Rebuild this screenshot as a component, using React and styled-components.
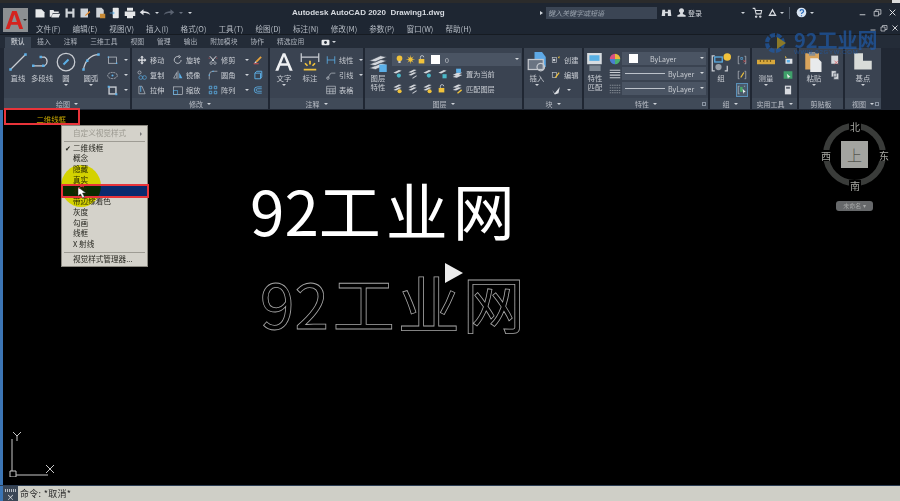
import React from 'react'
import styled, { createGlobalStyle } from 'styled-components'

const Global = createGlobalStyle`
  html, body { margin: 0; padding: 0; background: #000; }
  body { font-family: "Noto Sans CJK SC", "Liberation Sans", sans-serif; }
`

const Page = styled.div`
  width: 900px;
  height: 501px;
  display: flex;
  flex-direction: column;
  position: relative;
  overflow: hidden;
  background: #000;
  filter: blur(0.4px);
`
const TopStrip = styled.div`
  height: 3px;
  display: flex;
  justify-content: flex-end;
  background: #2b2b2b;
`
const CornerPatch = styled.div`
  width: 8px;
  height: 3px;
  background: #dcdcdc;
`
const Header = styled.div`
  height: 31px;
  display: flex;
  padding-left: 3px;
  background: #1e2632;
`
const AppButton = styled.div`
  width: 25px;
  height: 24px;
  margin-top: 5px;
  background: #8c8f92;
  color: #d5231f;
  font: bold 26px/24px "Liberation Sans", sans-serif;
  padding-left: 2px;
  box-sizing: border-box;
  flex: none;
  position: relative;
  &::after {
    content: '';
    position: absolute;
    right: 1px;
    bottom: 9px;
    border: 2px solid transparent;
    border-top-color: #222;
  }
`
const HeaderBody = styled.div`
  flex: 1;
  display: flex;
  flex-direction: column;
`
const TitleRow = styled.div`
  height: 19px;
  display: flex;
  align-items: center;
`
const QuickBar = styled.div`
  width: 264px;
  padding-left: 6px;
  display: flex;
  align-items: center;
  gap: 3px;
  flex: none;
  box-sizing: border-box;
`
const TitleText = styled.div`
  width: 246px;
  flex: none;
  font: bold 8px "Liberation Sans", sans-serif;
  color: #d6dae0;
  white-space: pre;
`
const SearchArrow = styled.span`
  width: 0;
  height: 0;
  flex: none;
  margin: 0 3px 0 2px;
  border: 2.5px solid transparent;
  border-left: 3px solid #cfd4da;
  border-right-width: 0;
`
const SearchBox = styled.div`
  width: 111px;
  height: 12px;
  flex: none;
  background: #3b4554;
  color: #9aa3ae;
  font-size: 7px;
  font-style: italic;
  line-height: 12px;
  padding-left: 2px;
  box-sizing: border-box;
`
const TitleTools = styled.div`
  display: flex;
  align-items: center;
  margin-left: 4px;
  color: #d6dae0;
  font-size: 7px;
  white-space: nowrap;
`
const Space = styled.span`
  width: ${p => p.$w}px;
  flex: none;
`
const Sep = styled.span`
  width: 1px;
  height: 12px;
  background: #4b5563;
  margin: 0 6px 0 5px;
`
const Caret = styled.span`
  display: inline-block;
  width: 0;
  height: 0;
  border: ${p => p.$s || 2}px solid transparent;
  border-top-color: ${p => p.$c || '#cfd4da'};
  border-bottom-width: 0;
  margin: ${p => p.$m || '0 1px'};
  flex: none;
`
const MenuRow = styled.div`
  height: 12px;
  display: flex;
  align-items: center;
  justify-content: space-between;
  padding-left: 8px;
`
const MenuItems = styled.div`
  display: flex;
  gap: 12px;
  font-size: 7.6px;
  color: #b6bcc4;
`
const WinButtons = styled.div`
  display: flex;
  align-items: center;
  gap: 3px;
  padding-right: 1px;
`
const TabRow = styled.div`
  height: 13px;
  display: flex;
  align-items: flex-end;
  padding-left: 5px;
  background: #242c38;
  border-top: 1px solid #161b22;
`
const Tab = styled.div`
  padding: 0 ${p => (p.$active ? '6px' : '6.5px')};
  height: 11px;
  line-height: 9px;
  font-size: 6.8px;
  color: ${p => (p.$active ? '#e3e6ea' : '#aeb4bd')};
  background: ${p => (p.$active ? '#3a4452' : 'transparent')};
`
const VideoTab = styled.div`
  height: 11px;
  display: flex;
  align-items: flex-start;
  gap: 2px;
  margin-left: 10px;
  padding-top: 1px;
  box-sizing: border-box;
`
const Ribbon = styled.div`
  height: 62px;
  display: flex;
  gap: 2px;
  padding: 0 0 1px 4px;
  box-sizing: border-box;
  background: #202733;
`
const Panel = styled.div`
  width: ${p => p.$w}px;
  flex: none;
  display: flex;
  flex-direction: column;
  background: #3a4351;
`
const PanelBody = styled.div`
  height: 50px;
  display: flex;
  padding: 4px 2px 0;
  box-sizing: border-box;
`
const PanelFoot = styled.div`
  flex: 1;
  background: #404a58;
  color: #b9bec6;
  font-size: 7px;
  display: flex;
  align-items: center;
  justify-content: center;
  position: relative;
`
const Launcher = styled.span`
  position: absolute;
  right: 2px;
  bottom: 3px;
  width: 4px;
  height: 4px;
  border: 1px solid #8a94a2;
  box-sizing: border-box;
`
const BigTool = styled.div`
  width: ${p => p.$w || 24}px;
  flex: none;
  display: flex;
  flex-direction: column;
  align-items: center;
  color: #c8ccd2;
  font-size: 7.4px;
  line-height: 9px;
  text-align: center;
`
const BigIcon = styled.div`
  height: 20px;
  display: flex;
  align-items: center;
  justify-content: center;
  margin-bottom: 1px;
`
const Col = styled.div`
  display: flex;
  flex-direction: column;
  gap: ${p => (p.$gap !== undefined ? p.$gap : 3)}px;
  width: ${p => (p.$w ? `${p.$w}px` : 'auto')};
  flex: none;
  margin: ${p => (p.$mt !== undefined ? p.$mt : 2)}px 0 0 ${p => p.$ml || 0}px;
`
const SmallTool = styled.div`
  height: 12px;
  display: flex;
  align-items: center;
  gap: 3px;
  font-size: 7.2px;
  color: #c8ccd2;
  white-space: nowrap;
  outline: ${p => (p.$on ? '1px solid #5a90b8' : 'none')};
  background: ${p => (p.$on ? '#4a5a6c' : 'transparent')};
`
const Combo = styled.div`
  width: ${p => p.$w}px;
  height: 13px;
  background: #4a5463;
  color: #c8ccd2;
  font-size: 7px;
  display: flex;
  align-items: center;
  padding-left: 3px;
  gap: 2px;
  box-sizing: border-box;
  position: relative;
  flex: none;
  &::after {
    content: '';
    position: absolute;
    right: 2px;
    top: 5px;
    border: 2.5px solid transparent;
    border-top-color: #d5d9de;
    border-bottom-width: 0;
  }
`
const Swatch = styled.span`
  width: 9px;
  height: 9px;
  background: #fff;
  margin: ${p => p.$m || 0};
`
const LineSample = styled.span`
  width: 40px;
  height: 1px;
  background: #bcc2ca;
  margin-right: 1px;
`
const IconGrid = styled.div`
  display: grid;
  grid-template-columns: repeat(5, 15px);
  row-gap: 4px;
  margin-top: 2px;
  align-items: center;
`
const LayerWrap = styled.div`
  display: flex;
  flex-direction: column;
  margin: 1px 0 0 3px;
`
const LayerRow = styled.div`
  display: flex;
  align-items: center;
  gap: 3px;
  height: 11px;
  font-size: 7.2px;
  color: #c8ccd2;
  white-space: nowrap;
`
const Canvas = styled.div`
  flex: 1;
  position: relative;
  background: #000;
  border-left: 3px solid #3c75b4;
`
const ViewLabel = styled.div`
  position: absolute;
  left: 1px;
  top: -2px;
  width: 76px;
  height: 17px;
  box-sizing: border-box;
  border: 2px solid #e8343a;
  color: #c9a800;
  font-size: 7.4px;
  line-height: 18px;
  text-align: right;
  padding-right: 12px;
`
const ContextMenu = styled.div`
  position: absolute;
  left: 58px;
  top: 15px;
  width: 87px;
  height: 142px;
  background: #d4d2ca;
  border: 1px solid #8a8880;
  box-sizing: border-box;
  padding-top: 2px;
  color: #26261f;
  font-size: 7.6px;
`
const MenuEntry = styled.div`
  height: 10.7px;
  line-height: 10.7px;
  padding-left: 11px;
  position: relative;
  white-space: nowrap;
  color: ${p => (p.$dim ? '#9a988f' : 'inherit')};
  background: ${p => (p.$hot ? '#0a2a6e' : 'transparent')};
  box-shadow: ${p => (p.$hot ? '0 1px 0 #0a2a6e, 0 -1px 0 #0a2a6e' : 'none')};
`
const MenuCheck = styled.span`
  position: absolute;
  left: 3px;
  top: 0;
  font-size: 7px;
`
const MenuArrow = styled.span`
  position: absolute;
  right: 5px;
  top: 4px;
  border: 2px solid transparent;
  border-left-color: #777;
  border-right-width: 0;
`
const MenuRule = styled.div`
  height: 1px;
  margin: 2px 2px 1px;
  background: #9e9c94;
`
const Spotlight = styled.div`
  position: absolute;
  left: 58px;
  top: 55px;
  width: 40px;
  height: 42px;
  border-radius: 50%;
  background: #ffff00;
  mix-blend-mode: multiply;
`
const RedBox = styled.div`
  position: absolute;
  left: 58px;
  top: 74px;
  width: 88px;
  height: 14px;
  box-sizing: border-box;
  border: 2px solid #e8343a;
`
const Pointer = styled.svg`
  position: absolute;
  left: 74px;
  top: 76px;
`
const BigBrand = styled.div`
  position: absolute;
  left: ${p => p.$x}px;
  top: ${p => p.$y}px;
  font-size: 62px;
  line-height: 80px;
  white-space: nowrap;
  color: ${p => (p.$outline ? 'transparent' : '#fff')};
  -webkit-text-stroke: ${p => (p.$outline ? '0.8px #a8a8a8' : '0')};
`
const BrandHan = styled.span`
  margin-left: ${p => p.$gap}px;
  letter-spacing: ${p => p.$track}px;
`
const PlayButton = styled.svg`
  position: absolute;
  left: 441px;
  top: 152px;
`
const ViewCube = styled.div`
  position: absolute;
  left: 820px;
  top: 13px;
  width: 63px;
  height: 63px;
  box-sizing: border-box;
  border: 6.5px solid #3a3c3a;
  border-radius: 50%;
  display: flex;
  align-items: center;
  justify-content: center;
`
const CubeFace = styled.div`
  width: 27px;
  height: 27px;
  background: #a3a4a0;
  color: #55564f;
  font-size: 15px;
  font-weight: 300;
  line-height: 27px;
  text-align: center;
`
const Compass = styled.span`
  position: absolute;
  left: ${p => p.$x}px;
  top: ${p => p.$y}px;
  width: 12px;
  text-align: center;
  background: #000;
  color: #a8a9a4;
  font-size: 10px;
  line-height: 11px;
`
const CubePill = styled.div`
  position: absolute;
  left: 833px;
  top: 91px;
  width: 37px;
  height: 10px;
  border-radius: 3px;
  background: #66686a;
  color: #a6a8a8;
  font-size: 6px;
  line-height: 10px;
  text-align: center;
`
const Ucs = styled.svg`
  position: absolute;
  left: 5px;
  top: 321px;
`
const CommandBar = styled.div`
  height: 15px;
  display: flex;
  align-items: stretch;
  background: #cfcfc7;
  border-top: 1px solid #2b3c52;
`
const CommandGrip = styled.div`
  width: 18px;
  flex: none;
  background: #3a4655;
  border-left: 3px solid #3c75b4;
  box-sizing: border-box;
  color: #e6e8ea;
  font-size: 8px;
  text-align: center;
  line-height: 21px;
  position: relative;
  &::before {
    content: '';
    position: absolute;
    left: 2px;
    right: 2px;
    top: 3px;
    height: 3px;
    background: repeating-linear-gradient(90deg, #b8bec6 0 1px, transparent 1px 2px);
  }
`
const CommandText = styled.div`
  padding-left: 2px;
  font-size: 9px;
  letter-spacing: 0.3px;
  line-height: 15px;
  color: #2a2a2a;
`
const Watermark = styled.div`
  position: absolute;
  left: 762px;
  top: 30px;
  display: flex;
  gap: 6px;
  color: #1f5aa8;
  opacity: 0.7;
  pointer-events: none;
`
const WatermarkName = styled.div`
  font-size: 20px;
  font-weight: 700;
  line-height: 19px;
`
const WatermarkUrl = styled.div`
  font: 6px/7px "Liberation Sans", sans-serif;
  letter-spacing: 0.75px;
  white-space: nowrap;
`

/* quick drawings for the ribbon, all on a 16 box */
const B = '#5cb0e8'
const L = '#c9cdd3'
const G = '#f0c23c'
const glyphs = {
  newDoc: <path d="M2 3h8l4 4v7H2z" fill="#e6e8ea" />,
  open: <path d="M1 13V4h5l1 2h6v2H5l-2 5zM3 14l2-5h10l-2 5z" fill="#e6e8ea" />,
  save: <path d="M2 2h12v12H2zM5 2v4h6V2zM5 9v5h6V9z" fill="#cfd3d8" fillRule="evenodd" />,
  saveAs: <g><path d="M2 2h10v12H2z" fill="#cfd3d8" /><path d="M8 11l6-6 1 2-6 5z" fill="#e58a2e" /></g>,
  cloud: <g><path d="M3 1h7l3 3v10H3z" fill="#cfd3d8" /><rect x="8" y="9" width="7" height="6" fill="#c88a35" /></g>,
  phone: <g><rect x="5" y="1" width="8" height="14" rx="1" fill="#e6e8ea" /><path d="M1 8h6M5 6l2 2-2 2" stroke={B} fill="none" /></g>,
  print: <path d="M4 1h8v4H4zM1 6h14v6h-3v3H4v-3H1z" fill="#e6e8ea" />,
  undo: <path d="M1 7l5-4v2.500c4 0 8 1 9 5-2-2-5-2.500-9-2.500V11z" fill="#e0e2e6" />,
  redo: <path d="M15 7l-5-4v2.500c-4 0-8 1-9 5 2-2 5-2.500 9-2.500V11z" fill="#5a6270" />,
  video: <g><rect x="1" y="3" width="14" height="10" rx="2" fill="#e6e8ea" /><circle cx="8" cy="8" r="2.500" fill="#242c38" /></g>,
  binoc: <path d="M2 4h4v3h4V4h4l1 9h-5V9H6v4H1z" fill="#d8dbe0" />,
  user: <path d="M8 2a3.500 3.500 0 0 1 2 6.500V10l4 2v2H2v-2l4-2V8.500A3.500 3.500 0 0 1 8 2z" fill="#d8dbe0" />,
  cart: <path d="M1 2h3l2 8h7l1-5H5M6 13a1 1 0 1 0 .1 0M12 13a1 1 0 1 0 .1 0" stroke="#d8dbe0" strokeWidth="1.500" fill="none" />,
  tri: <path d="M8 2l6 11H2zM8 6l-3 5h6z" fill="#d8dbe0" fillRule="evenodd" />,
  help: <g><circle cx="8" cy="8" r="7" fill="#d9e4f2" /><path d="M6 6c0-3 5-3 5 0 0 2-3 2-3 4M8 12v1.500" stroke="#2768b8" strokeWidth="1.800" fill="none" /></g>,
  min: <path d="M3 12h10" stroke="#e0e2e6" strokeWidth="1.500" />,
  restore: <path d="M2 6h8v8H2zM5 6V3h9v8h-4" stroke="#e0e2e6" strokeWidth="1.300" fill="none" />,
  close: <path d="M3 3l10 10M13 3L3 13" stroke="#e8eaec" strokeWidth="1.700" />,
  line: <g><path d="M2 14L14 2" stroke={L} /><path d="M1 13h2v2H1zM13 1h2v2h-2z" fill={B} /></g>,
  poly: <g><path d="M1 11h9a4 4 0 0 0 0-7H7" stroke={L} fill="none" /><path d="M0 10h2v2H0zM8 10h2v2H8zM6 3h2v2H6z" fill={B} /></g>,
  circle: <g><circle cx="8" cy="8" r="7" stroke={L} fill="none" /><path d="M6 10l4-4" stroke={B} strokeWidth="1.500" /></g>,
  arc: <g><path d="M2 14C3 7 8 2 14 2" stroke={L} fill="none" /><path d="M1 13h2v2H1zM4 6h2v2H4zM13 1h2v2h-2z" fill={B} /></g>,
  rect: <g><rect x="2" y="3" width="12" height="9" stroke={L} fill="none" /><path d="M1 2h2v2H1zM13 11h2v2h-2z" fill={B} /></g>,
  ellipse: <g><ellipse cx="8" cy="8" rx="7" ry="4.500" stroke={L} fill="none" strokeDasharray="3 1" /><circle cx="8" cy="8" r="1.500" fill={B} /></g>,
  hatch: <g><rect x="3" y="3" width="10" height="10" stroke={L} strokeWidth="2" fill="none" /><path d="M1 1h3v3H1zM12 12h3v3h-3z" fill={B} /></g>,
  move: <path d="M8 1l3 3H9v3h3V5l3 3-3 3V9H9v3h2l-3 3-3-3h2V9H4v2L1 8l3-3v2h3V4H5z" fill="#e4e6ea" />,
  copy: <g><circle cx="4" cy="4" r="2.500" stroke={L} fill="none" /><circle cx="6" cy="12" r="3" stroke={B} fill="none" /><circle cx="12" cy="12" r="3" stroke={B} fill="none" /></g>,
  stretch: <g><path d="M3 2h5l5 12H3z" stroke={L} fill="none" /><path d="M6 2v9" stroke={B} strokeWidth="1.500" /></g>,
  rotate: <path d="M13 8a5.500 5.500 0 1 1-3-5M9 0l3 3-3 2" stroke={L} strokeWidth="1.400" fill="none" />,
  mirror: <g><path d="M6 4v9H1z" stroke={L} fill="none" /><path d="M10 4v9h5z" fill={B} /><path d="M8 1v14" stroke={L} /></g>,
  scale: <g><rect x="1" y="3" width="14" height="12" stroke={L} fill="none" /><rect x="1" y="9" width="6" height="6" fill="none" stroke={B} /></g>,
  trim: <g><path d="M3 2l7 8M13 2L6 10" stroke="#e4e6ea" strokeWidth="1.500" /><circle cx="5" cy="13" r="2" stroke={L} fill="none" /><circle cx="11" cy="13" r="2" stroke={L} fill="none" /><path d="M1 5h2M13 5h2" stroke="#e05050" /></g>,
  fillet: <g><path d="M2 15V8a6 6 0 0 1 6-6h7" stroke={L} fill="none" /><path d="M1 7h2v2H1zM7 1h2v2H7z" fill={B} /></g>,
  array: <path d="M2 2h4v4H2zM10 2h4v4h-4zM2 10h4v4H2zM10 10h4v4h-4z" stroke={B} fill="none" strokeWidth="1.300" />,
  eraser: <g><path d="M4 10l8-8 2 2-8 8z" fill="#e8a33c" /><path d="M1 14h8" stroke="#e05050" strokeWidth="1.500" /><path d="M2 13l2-3 2 2z" fill="#eee" /></g>,
  cube: <path d="M3 5h9v9H3zM3 5l3-3h8v9l-2 3" stroke={B} strokeWidth="1.500" fill="none" />,
  offset: <path d="M14 3H7a5 5 0 0 0 0 10h7M14 6H7a2 2 0 0 0 0 4h7" stroke={B} strokeWidth="1.300" fill="none" />,
  letter: <path d="M1 15L7 1h2l6 14h-2.500l-1.500-4H5l-1.500 4zM5.800 9h4.400L8 3.500z" fill="#eef0f2" />,
  dim: <g><path d="M1 4h14M1 1v7M15 1v7" stroke={L} /><path d="M8 7v3M4 9l2 2M12 9l-2 2M3 14h10" stroke={G} strokeWidth="1.400" /></g>,
  linear: <path d="M2 2v12M14 2v12M2 8h12" stroke={B} strokeWidth="1.300" fill="none" />,
  leader: <g><path d="M2 13c3 0 3-8 7-8h6" stroke={L} fill="none" /><circle cx="3" cy="13" r="2" stroke={L} fill="none" /></g>,
  table: <path d="M1 2h14v12H1zM1 6h14M6 6v8M11 6v8M1 10h14" stroke={L} fill="none" />,
  layers: <g><path d="M1 7l9-4 5 1-9 4zM1 10l9-4 5 1-9 4zM1 13l9-4 5 1-9 4z" fill="#d4d7dc" stroke="#3a4351" strokeWidth="0.500" /><rect x="9" y="10" width="6" height="6" fill={B} /></g>,
  bulb: <g><circle cx="8" cy="6" r="5" fill={G} /><rect x="6" y="11" width="4" height="3" fill="#ddd" /></g>,
  sun: <g><circle cx="8" cy="8" r="4" fill={G} /><path d="M8 1v14M1 8h14M3 3l10 10M13 3L3 13" stroke={G} /></g>,
  lock: <g><rect x="3" y="7" width="10" height="8" fill={G} /><path d="M6 7V4a3 3 0 0 1 6 0" stroke={L} strokeWidth="1.500" fill="none" /></g>,
  layerA: <g><path d="M2 7l8-4 4 1-8 4z" fill="#d4d7dc" /><circle cx="10" cy="11" r="3" fill="#4bb8c8" /></g>,
  layerB: <g><path d="M2 6l8-4 4 1-8 4zM2 10l8-4 4 1-8 4z" fill="#d4d7dc" /><path d="M8 15l6-4" stroke={L} strokeWidth="1.500" /></g>,
  layerC: <g><path d="M2 7l8-4 4 1-8 4z" fill="#d4d7dc" /><rect x="8" y="9" width="6" height="6" fill="#4bb8c8" /></g>,
  layerD: <g><path d="M2 6l8-4 4 1-8 4zM2 10l8-4 4 1-8 4z" fill="#d4d7dc" /><circle cx="11" cy="12" r="3" fill={G} /></g>,
  setCur: <g><path d="M1 10l8-4 6 1-8 4zM1 13l8-4 6 1-8 4z" fill="#d4d7dc" /><rect x="6" y="1" width="7" height="6" fill={B} /></g>,
  match: <g><path d="M1 6l8-4 5 1-8 4zM1 10l8-4 5 1-8 4z" fill="#d4d7dc" /><path d="M8 15l6-5" stroke={G} strokeWidth="2" /></g>,
  insert: <g><path d="M6 0h6l3 4v8H6z" fill="#5ea9e6" /><rect x="1" y="6" width="12" height="8" fill="#6a7482" stroke="#c4c8ce" /><circle cx="11" cy="12" r="3" fill="none" stroke="#c4c8ce" /></g>,
  create: <g><rect x="2" y="4" width="7" height="8" stroke={L} fill="none" /><circle cx="5" cy="8" r="2" fill={L} /><path d="M11 3l3-1-1 4z" fill={G} /></g>,
  edit: <g><rect x="2" y="4" width="7" height="8" stroke={L} fill="none" /><path d="M7 12l6-8" stroke={G} strokeWidth="2" /></g>,
  attr: <path d="M2 8l4 5 8-10-2 10-6 2z" fill="#dcdfe3" />,
  matchProps: <g><rect x="1" y="0" width="13" height="10" fill="#d8dce0" /><rect x="3" y="2" width="9" height="5" fill="#58b0e4" /><rect x="3" y="11" width="10" height="5" fill="#7c8590" /></g>,
  wheel: <g><path d="M8 8V1a7 7 0 0 1 7 7z" fill="#e8b83c" /><path d="M8 8h7a7 7 0 0 1-7 7z" fill="#48b070" /><path d="M8 8v7a7 7 0 0 1-7-7z" fill="#4a7ed0" /><path d="M8 8H1a7 7 0 0 1 7-7z" fill="#d85080" /></g>,
  weights: <path d="M1 3h14M1 6h14M1 9.500h14M1 13h14" stroke="#c9cdd3" strokeWidth="1.500" />,
  dashes: <path d="M1 3h14M1 6.500h14M1 10h14M1 13h14" stroke="#9aa0a8" strokeDasharray="2 1" />,
  group: <g><path d="M3 3H1v12h2M11 15h2V11" stroke={L} fill="none" /><rect x="3" y="4" width="6" height="4" stroke={B} fill="none" /><circle cx="6" cy="12" r="2.500" fill="#9aa0a8" /><circle cx="13" cy="4" r="3" fill={G} /></g>,
  ungroup: <g><path d="M4 2H2v12h2M12 2h2v12h-2" stroke={L} fill="none" /><path d="M6 4h3v3H6z" stroke={B} fill="none" /><path d="M10 8l4 4M14 8l-4 4" stroke="#e05050" /></g>,
  groupEd: <g><path d="M4 2H2v12h2M12 2h2v12h-2" stroke={L} fill="none" /><path d="M6 12l5-8" stroke={G} strokeWidth="2" /></g>,
  groupSel: <g><path d="M4 2H2v12h2M11 2h2" stroke={L} fill="none" /><rect x="5" y="3" width="4" height="8" fill="#48a868" /><path d="M9 6l5 5-3 .5-1 3z" fill="#eee" /></g>,
  ruler: <g><rect x="0" y="6" width="16" height="4" fill="#d8a83c" /><path d="M3 6v2M6 6v2M9 6v2M12 6v2" stroke="#7a5c18" /></g>,
  quick: <g><rect x="4" y="6" width="11" height="8" fill="#dfe3e8" /><rect x="6" y="8" width="5" height="4" fill={B} /><path d="M3 1l3 3-2 1z" fill={G} /></g>,
  sheet: <g><rect x="1" y="2" width="14" height="12" fill="#3fa06a" /><path d="M6 6l6 5-3 .5-1 3z" fill="#eee" /></g>,
  calc: <g><rect x="3" y="1" width="10" height="14" fill="#d8dbe0" /><rect x="5" y="3" width="6" height="3" fill="#59616d" /></g>,
  paste: <g><rect x="1" y="1" width="11" height="13" fill="#d9a45c" /><rect x="4" y="0" width="5" height="3" fill="#8c8f92" /><path d="M5 5h6l3 3v8H5z" fill="#e8eaec" /></g>,
  cut: <g><rect x="2" y="1" width="11" height="13" fill="#d4d7dc" /><path d="M7 9l6 6M13 9l-6 6" stroke="#e05050" /></g>,
  dup: <path d="M2 1h8v10H2zM6 5h8v10H6z" fill="#d4d7dc" stroke="#3a4351" />,
  base: <path d="M1 1h7v6h7v7H1z" fill="#d8dbd8" />,
}

const Glyph = ({ name, w = 10 }) => (
  <svg width={w} height={w} viewBox="0 0 16 16" style={{ flex: 'none', overflow: 'visible' }}>
    {glyphs[name]}
  </svg>
)

const Big = ({ icon, size = 20, w, caret, children }) => (
  <BigTool $w={w}>
    <BigIcon><Glyph name={icon} w={size} /></BigIcon>
    {children}
    {caret && <Caret $m="2px 0 0" />}
  </BigTool>
)

const Small = ({ icon, caret, caretGap = 3, on, size = 10, children }) => (
  <SmallTool $on={on}>
    <Glyph name={icon} w={size} />
    {children}
    {caret && <Caret $m={`0 0 0 ${caretGap}px`} />}
  </SmallTool>
)

const Foot = ({ title, launcher }) => (
  <PanelFoot>
    {title}
    <Caret $m="0 0 0 4px" />
    {launcher && <Launcher />}
  </PanelFoot>
)

const quick = ['newDoc', 'open', 'save', 'saveAs', 'cloud', 'phone', 'print']
const menus = ['文件(F)', '编辑(E)', '视图(V)', '插入(I)', '格式(O)', '工具(T)', '绘图(D)', '标注(N)', '修改(M)', '参数(P)', '窗口(W)', '帮助(H)']
const tabs = ['默认', '插入', '注释', '三维工具', '视图', '管理', '输出', '附加模块', '协作', '精选应用']
const styles = ['二维线框', '概念', '隐藏', '真实', '着色', '带边缘着色', '灰度', '勾画', '线框', 'X 射线']

export default function App() {
  return (
    <Page>
      <Global />
      <TopStrip><CornerPatch /></TopStrip>
      <Header>
        <AppButton>A</AppButton>
        <HeaderBody>
          <TitleRow>
            <QuickBar>
              {quick.map(q => <Glyph key={q} name={q} w={12} />)}
              <Glyph name="undo" w={12} />
              <Caret />
              <Glyph name="redo" w={12} />
              <Caret $c="#6a7280" />
              <Caret />
            </QuickBar>
            <TitleText>Autodesk AutoCAD 2020  Drawing1.dwg</TitleText>
            <SearchArrow />
            <SearchBox>键入关键字或短语</SearchBox>
            <TitleTools>
              <Glyph name="binoc" w={11} />
              <Space $w={4} />
              <Glyph name="user" w={11} />
              <Space $w={1} />
              登录
              <Caret $m="0 7px 0 39px" />
              <Glyph name="cart" w={11} />
              <Space $w={4} />
              <Glyph name="tri" w={11} />
              <Caret $m="0 0 0 2px" />
              <Sep />
              <Glyph name="help" w={11} />
              <Caret $m="0 0 0 3px" />
              <Space $w={44} />
              <Glyph name="min" w={9} />
              <Space $w={6} />
              <Glyph name="restore" w={9} />
              <Space $w={6} />
              <Glyph name="close" w={9} />
            </TitleTools>
          </TitleRow>
          <MenuRow>
            <MenuItems>{menus.map(m => <span key={m}>{m}</span>)}</MenuItems>
            <WinButtons>
              <Glyph name="min" w={8} />
              <Glyph name="restore" w={8} />
              <Glyph name="close" w={8} />
            </WinButtons>
          </MenuRow>
        </HeaderBody>
      </Header>
      <TabRow>
        {tabs.map((t, i) => <Tab key={t} $active={i === 0}>{t}</Tab>)}
        <VideoTab><Glyph name="video" w={9} /><Caret $m="3px 0 0" /></VideoTab>
      </TabRow>
      <Ribbon>
        <Panel $w={126}>
          <PanelBody>
            <Big icon="line" w={24}>直线</Big>
            <Big icon="poly" w={24}>多段线</Big>
            <Big icon="circle" w={24} caret>圆</Big>
            <Big icon="arc" w={26} caret>圆弧</Big>
            <Col $ml={3}>
              <Small icon="rect" caret size={11} />
              <Small icon="ellipse" caret size={11} />
              <Small icon="hatch" caret size={11} />
            </Col>
          </PanelBody>
          <Foot title="绘图" />
        </Panel>
        <Panel $w={136}>
          <PanelBody>
            <Col $w={36} $ml={3}>
              <Small icon="move">移动</Small>
              <Small icon="copy">复制</Small>
              <Small icon="stretch">拉伸</Small>
            </Col>
            <Col $w={35}>
              <Small icon="rotate">旋转</Small>
              <Small icon="mirror">镜像</Small>
              <Small icon="scale">缩放</Small>
            </Col>
            <Col $w={45}>
              <Small icon="trim" caret caretGap={7}>修剪</Small>
              <Small icon="fillet" caret caretGap={7}>圆角</Small>
              <Small icon="array" caret caretGap={7}>阵列</Small>
            </Col>
            <Col>
              <Small icon="eraser" />
              <Small icon="cube" />
              <Small icon="offset" />
            </Col>
          </PanelBody>
          <Foot title="修改" />
        </Panel>
        <Panel $w={93}>
          <PanelBody>
            <Big icon="letter" w={24} caret>文字</Big>
            <Big icon="dim" w={28}>标注</Big>
            <Col $ml={2}>
              <Small icon="linear" caret>线性</Small>
              <Small icon="leader" caret>引线</Small>
              <Small icon="table">表格</Small>
            </Col>
          </PanelBody>
          <Foot title="注释" />
        </Panel>
        <Panel $w={157}>
          <PanelBody>
            <Big icon="layers" w={22}>图层<br />特性</Big>
            <LayerWrap>
              <Combo $w={129}>
                <Glyph name="bulb" w={9} />
                <Glyph name="sun" w={9} />
                <Glyph name="lock" w={9} />
                <Swatch $m="0 3px" />
                0
              </Combo>
              <IconGrid>
                <Glyph name="layerA" w={11} />
                <Glyph name="layerB" w={11} />
                <Glyph name="layerA" w={11} />
                <Glyph name="layerC" w={11} />
                <LayerRow><Glyph name="setCur" w={11} />置为当前</LayerRow>
                <Glyph name="layerD" w={11} />
                <Glyph name="layerB" w={11} />
                <Glyph name="layerD" w={11} />
                <Glyph name="lock" w={9} />
                <LayerRow><Glyph name="match" w={11} />匹配图层</LayerRow>
              </IconGrid>
            </LayerWrap>
          </PanelBody>
          <Foot title="图层" />
        </Panel>
        <Panel $w={58}>
          <PanelBody>
            <Big icon="insert" w={22} caret>插入</Big>
            <Col $ml={3}>
              <Small icon="create">创建</Small>
              <Small icon="edit">编辑</Small>
              <Small icon="attr" caret />
            </Col>
          </PanelBody>
          <Foot title="块" />
        </Panel>
        <Panel $w={124}>
          <PanelBody>
            <Big icon="matchProps" w={18} size={18}>特性<br />匹配</Big>
            <Col $ml={5} $mt={1}>
              <Glyph name="wheel" w={12} />
              <Glyph name="weights" w={12} />
              <Glyph name="dashes" w={12} />
            </Col>
            <Col $ml={1} $mt={0} $gap={2}>
              <Combo $w={84}><Swatch $m="0 10px 0 4px" />ByLayer</Combo>
              <Combo $w={84}><LineSample />ByLayer</Combo>
              <Combo $w={84}><LineSample />ByLayer</Combo>
            </Col>
          </PanelBody>
          <Foot title="特性" launcher />
        </Panel>
        <Panel $w={40}>
          <PanelBody>
            <Big icon="group" w={18}>组</Big>
            <Col $ml={7}>
              <Small icon="ungroup" />
              <Small icon="groupEd" />
              <Small icon="groupSel" on />
            </Col>
          </PanelBody>
          <Foot title="组" />
        </Panel>
        <Panel $w={45}>
          <PanelBody>
            <Big icon="ruler" w={24} size={18} caret>测量</Big>
            <Col $ml={5}>
              <Small icon="quick" />
              <Small icon="sheet" />
              <Small icon="calc" />
            </Col>
          </PanelBody>
          <Foot title="实用工具" />
        </Panel>
        <Panel $w={44}>
          <PanelBody>
            <Big icon="paste" w={26} caret>粘贴</Big>
            <Col $ml={3}>
              <Small icon="cut" />
              <Small icon="dup" />
            </Col>
          </PanelBody>
          <PanelFoot>剪贴板</PanelFoot>
        </Panel>
        <Panel $w={36}>
          <PanelBody>
            <Big icon="base" w={32} caret>基点</Big>
          </PanelBody>
          <Foot title="视图" launcher />
        </Panel>
      </Ribbon>
      <Canvas>
        <ViewLabel>二维线框</ViewLabel>
        <ContextMenu>
          <MenuEntry $dim>自定义视觉样式<MenuArrow /></MenuEntry>
          <MenuRule />
          {styles.map((s, i) => (
            <MenuEntry key={s} $hot={i === 4}>
              {i === 0 && <MenuCheck>✔</MenuCheck>}
              {s}
            </MenuEntry>
          ))}
          <MenuRule />
          <MenuEntry>视觉样式管理器...</MenuEntry>
        </ContextMenu>
        <Spotlight />
        <RedBox />
        <Pointer width="10" height="13" viewBox="0 0 10 13">
          <path d="M1 1v9l2.500-2 2 4 2-1-2-4H9z" fill="#fff" stroke="#222" strokeWidth="0.500" />
          <path d="M2 3a3 3 0 0 1 5-2" stroke="#e8343a" fill="none" />
        </Pointer>
        <BigBrand $x={247} $y={59}>92<BrandHan $gap={0} $track={5}>工业网</BrandHan></BigBrand>
        <BigBrand $x={257} $y={152} $outline>92<BrandHan $gap={4} $track={3}>工业网</BrandHan></BigBrand>
        <PlayButton width="20" height="22" viewBox="0 0 20 22">
          <path d="M1 1l18 10L1 21z" fill="#ececec" />
        </PlayButton>
        <ViewCube><CubeFace>上</CubeFace></ViewCube>
        <Compass $x={846} $y={11}>北</Compass>
        <Compass $x={846} $y={70}>南</Compass>
        <Compass $x={817} $y={40}>西</Compass>
        <Compass $x={875} $y={40}>东</Compass>
        <CubePill>未命名 ▾</CubePill>
        <Ucs width="50" height="46" viewBox="0 0 50 46">
          <path d="M4 8v32M8 44h32M2 40h6v6H2z" stroke="#c8c8c8" fill="none" />
          <path d="M5 1l4 4 4-4M9 5v5M38 34l8 8M46 34l-8 8" stroke="#c8c8c8" fill="none" />
        </Ucs>
      </Canvas>
      <CommandBar>
        <CommandGrip>×</CommandGrip>
        <CommandText>命令: *取消*</CommandText>
      </CommandBar>
      <Watermark>
        <svg width="26" height="26" viewBox="0 0 26 26">
          <circle cx="13" cy="13" r="8" fill="none" stroke="#1f5aa8" strokeWidth="4" strokeDasharray="5 1.500" />
          <path d="M15 7l9 6-9 6z" fill="#b89a22" />
        </svg>
        <div>
          <WatermarkName>92工业网</WatermarkName>
          <WatermarkUrl>WWW.92GYW.COM</WatermarkUrl>
        </div>
      </Watermark>
    </Page>
  )
}
